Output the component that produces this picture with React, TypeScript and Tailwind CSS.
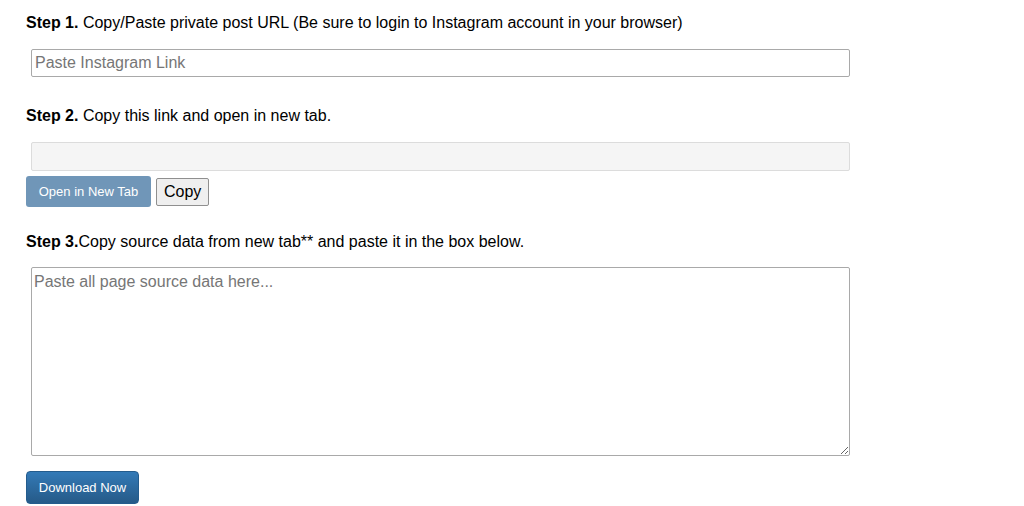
export default function App() {
  return (
    <div className="min-h-[506px] bg-white pl-[26px] pt-[12px] text-black font-['Liberation_Sans',Arial,sans-serif]">
      <p className="text-[16px] leading-[22px]">
        <b>Step 1.</b> Copy/Paste private post URL (Be sure to login to Instagram account in your browser)
      </p>
      <div className="pl-[5px] mt-[15px]">
        <input
          type="text"
          placeholder="Paste Instagram Link"
          className="block w-[819px] h-[28px] px-[3px] text-[16px] border border-[#a9a9a9] rounded-[2px] bg-white placeholder:text-[#767676] outline-none"
        />
      </div>

      <p className="text-[16px] leading-[22px] mt-[28px]">
        <b>Step 2.</b> Copy this link and open in new tab.
      </p>
      <div className="pl-[5px] mt-[15px]">
        <input
          type="text"
          readOnly
          className="block w-[819px] h-[29px] px-[3px] text-[16px] border border-[#dcdcdc] rounded-[2px] bg-[#f5f5f5] outline-none"
        />
      </div>
      <div className="flex items-center gap-[5px] mt-[5px]">
        <button className="h-[31px] w-[125px] rounded-[3px] bg-[#7096b8] text-white text-[13px]">
          Open in New Tab
        </button>
        <button className="h-[28px] px-[7px] rounded-[2px] border border-[#8f8f8f] bg-[#efefef] text-[16px] text-black">
          Copy
        </button>
      </div>

      <p className="text-[16px] leading-[22px] mt-[24px]">
        <b>Step 3.</b>Copy source data from new tab** and paste it in the box below.
      </p>
      <div className="pl-[5px] mt-[14px]">
        <textarea
          placeholder="Paste all page source data here..."
          className="block w-[819px] h-[189px] px-[2px] pt-[4px] pb-[2px] text-[16px] leading-[20px] border border-[#a9a9a9] rounded-[2px] bg-white placeholder:text-[#767676] outline-none resize-y"
        />
      </div>
      <button className="mt-[15px] h-[33px] w-[113px] rounded-[4px] border border-[#245c8d] bg-gradient-to-b from-[#337ab7] to-[#265a88] text-white text-[13px]">
        Download Now
      </button>
    </div>
  );
}
